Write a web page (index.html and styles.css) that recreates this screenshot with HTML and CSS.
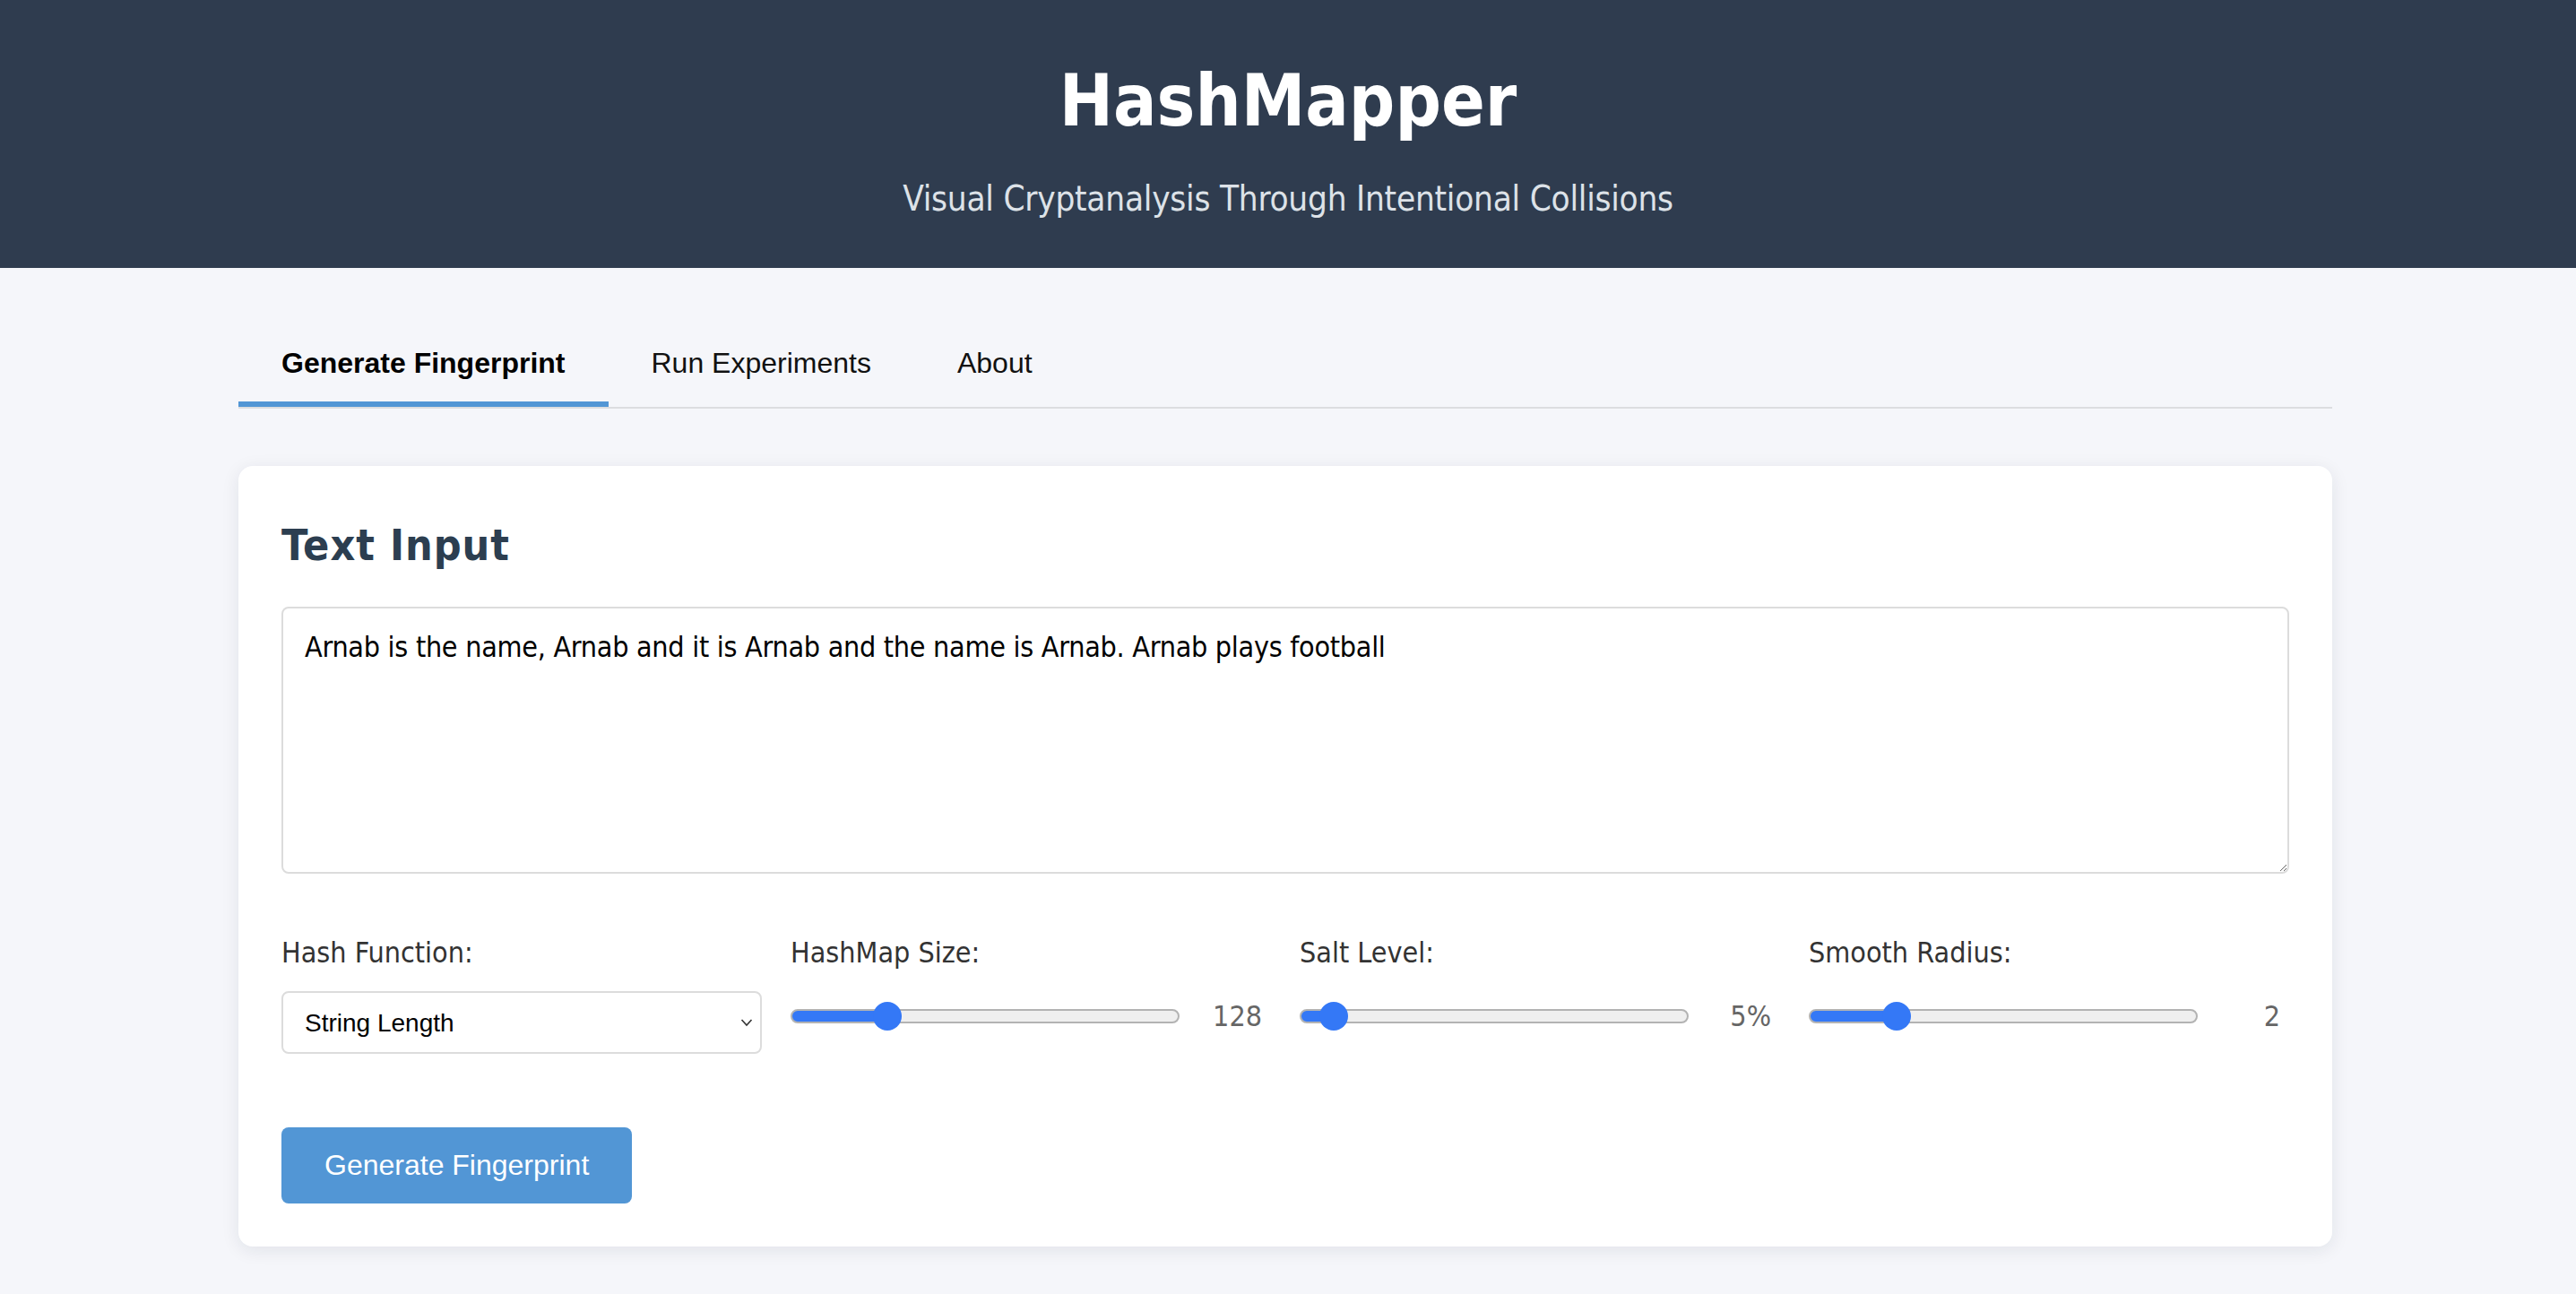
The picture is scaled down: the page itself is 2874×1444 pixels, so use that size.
FILE: index.html
```html
<!DOCTYPE html>
<html lang="en">
<head>
<meta charset="utf-8">
<title>HashMapper</title>
<link rel="stylesheet" href="styles.css">
</head>
<body>
<header class="site-header">
  <h1 class="title">HashMapper</h1>
  <p class="subtitle">Visual Cryptanalysis Through Intentional Collisions</p>
</header>
<main class="container">
  <nav class="tabs">
    <button class="tab active">Generate Fingerprint</button>
    <button class="tab">Run Experiments</button>
    <button class="tab">About</button>
  </nav>
  <section class="card">
    <h2 class="card-title">Text Input</h2>
    <textarea class="text-input">Arnab is the name, Arnab and it is Arnab and the name is Arnab. Arnab plays football</textarea>
    <div class="controls">
      <div class="control">
        <label class="control-label">Hash Function:</label>
        <div class="select-wrap">
          <select class="select">
            <option>String Length</option>
          </select>
          <svg class="chevron" width="14" height="10" viewBox="0 0 14 10"><path d="M1.5 2 L7 8 L12.5 2" fill="none" stroke="#333" stroke-width="1.6"/></svg>
        </div>
      </div>
      <div class="control">
        <label class="control-label">HashMap Size:</label>
        <div class="slider-row">
          <input class="range" type="range" min="16" max="512" value="128" style="--fill: 24.6%">
          <span class="value">128</span>
        </div>
      </div>
      <div class="control">
        <label class="control-label">Salt Level:</label>
        <div class="slider-row">
          <input class="range" type="range" min="0" max="100" value="5" style="--fill: 8.3%">
          <span class="value">5%</span>
        </div>
      </div>
      <div class="control">
        <label class="control-label">Smooth Radius:</label>
        <div class="slider-row">
          <input class="range" type="range" min="0" max="10" value="2" style="--fill: 22%">
          <span class="value">2</span>
        </div>
      </div>
    </div>
    <button class="primary-btn">Generate Fingerprint</button>
  </section>
</main>
</body>
</html>
```

FILE: styles.css
```css
* { box-sizing: border-box; }

html, body {
  margin: 0;
  padding: 0;
}

body {
  background: #f5f6fa;
  font-family: "DejaVu Sans Condensed", "DejaVu Sans", sans-serif;
  font-stretch: condensed;
  color: #333;
  min-height: 1444px;
}

.site-header {
  background: #2f3c4f;
  color: #fff;
  text-align: center;
  padding: 65px 0 54px;
}

.title {
  margin: 0;
  font-size: 80px;
  line-height: 96px;
  font-weight: bold;
}

.subtitle {
  margin: 38px 0 0;
  font-size: 38.4px;
  line-height: 46px;
  letter-spacing: -0.25px;
  color: #dde2e8;
}

.container {
  max-width: 2400px;
  margin: 0 auto;
  padding: 64px 35px 0 29px;
}

.tabs {
  display: flex;
  border-bottom: 2px solid #dcdde0;
  margin-bottom: 64px;
}

.tab {
  font-family: "Liberation Sans", Arial, sans-serif;
  font-stretch: normal;
  font-size: 32px;
  line-height: 37px;
  color: #111;
  background: none;
  border: none;
  border-bottom: 6px solid transparent;
  padding: 24px 48px;
  margin: 0;
  cursor: pointer;
}

.tab.active {
  font-weight: bold;
  color: #000;
  border-bottom-color: #5296d5;
}

.card {
  background: #fff;
  border-radius: 16px;
  box-shadow: 0 4px 20px rgba(20, 30, 60, 0.09);
  padding: 48px;
}

.card-title {
  margin: 12px 0 40px;
  font-size: 48px;
  line-height: 57px;
  letter-spacing: 1px;
  font-weight: bold;
  color: #2c3e50;
}

.text-input {
  display: block;
  width: 100%;
  height: 298px;
  border: 2px solid #dcdcdc;
  border-radius: 8px;
  padding: 24px;
  font-family: "DejaVu Sans Condensed", "DejaVu Sans", sans-serif;
  font-stretch: condensed;
  font-size: 32px;
  letter-spacing: -0.28px;
  color: #000;
  margin: 0 0 70px;
  resize: vertical;
}

.controls {
  display: grid;
  grid-template-columns: repeat(4, 1fr);
  column-gap: 32px;
  margin-bottom: 82px;
}

.control {
  display: flex;
  flex-direction: column;
}

.control-label {
  display: block;
  font-size: 32px;
  line-height: 37px;
  color: #333;
  margin-bottom: 24px;
}

.select-wrap {
  position: relative;
}

.select {
  -webkit-appearance: none;
  appearance: none;
  width: 100%;
  height: 70px;
  border: 2px solid #dcdcdc;
  border-radius: 8px;
  background: #fff;
  padding: 0 24px;
  font-family: "Liberation Sans", Arial, sans-serif;
  font-stretch: normal;
  font-size: 28px;
  color: #000;
}

.chevron {
  position: absolute;
  right: 10px;
  top: 30px;
  pointer-events: none;
}

.slider-row {
  display: flex;
  align-items: center;
  height: 56px;
  gap: 12px;
}

.range {
  -webkit-appearance: none;
  appearance: none;
  flex: 1;
  min-width: 0;
  height: 32px;
  margin: 0;
  background: transparent;
}

.range::-webkit-slider-runnable-track {
  height: 16px;
  border-radius: 8px;
  border: 2px solid #b3b3b3;
  background: linear-gradient(to right, #3478f6 var(--fill), #efefef var(--fill));
}

.range::-webkit-slider-thumb {
  -webkit-appearance: none;
  appearance: none;
  width: 32px;
  height: 32px;
  border-radius: 50%;
  background: #3478f6;
  border: none;
  margin-top: -10px;
}

.value {
  width: 80px;
  margin-right: 10px;
  text-align: right;
  font-size: 32px;
  line-height: 37px;
  color: #666;
}

.primary-btn {
  display: block;
  font-family: "Liberation Sans", Arial, sans-serif;
  font-stretch: normal;
  font-size: 32px;
  line-height: 37px;
  color: #fff;
  background: #5296d5;
  border: none;
  border-radius: 8px;
  padding: 24px 48px;
  cursor: pointer;
}
```
